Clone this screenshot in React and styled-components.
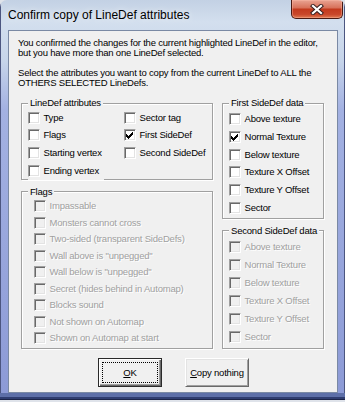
import React from 'react'
import styled, { createGlobalStyle } from 'styled-components'

const GlobalStyle = createGlobalStyle`
  html, body {
    margin: 0;
    padding: 0;
    background: #dfe3ea;
  }
  body {
    font-family: "Liberation Sans", Arial, sans-serif;
  }
`

const lineDefAttrs = [
  { label: 'Type', col: 1 },
  { label: 'Sector tag', col: 2 },
  { label: 'Flags', col: 1 },
  { label: 'First SideDef', col: 2, checked: true },
  { label: 'Starting vertex', col: 1 },
  { label: 'Second SideDef', col: 2 },
  { label: 'Ending vertex', col: 1, last: true },
]

const flags = [
  'Impassable',
  'Monsters cannot cross',
  'Two-sided (transparent SideDefs)',
  'Wall above is "unpegged"',
  'Wall below is "unpegged"',
  'Secret (hides behind in Automap)',
  'Blocks sound',
  'Not shown on Automap',
  'Shown on Automap at start',
]

const sideDefFields = [
  'Above texture',
  'Normal Texture',
  'Below texture',
  'Texture X Offset',
  'Texture Y Offset',
  'Sector',
]

const CheckMark = () => (
  <svg width="8" height="8" viewBox="0 0 8 8" shapeRendering="crispEdges">
    <path d="M0 3h1v1h1v1h1v-1h1v-1h1v-1h1v-1h1v3h-1v1h-1v1h-1v1h-1v1h-1v-1h-1v-1h-1z" fill="#000" />
  </svg>
)

const Check = ({ label, checked, disabled, last }) => (
  <CheckRow $disabled={disabled} $last={last}>
    <Box $disabled={disabled}>{checked && <CheckMark />}</Box>
    <span>{label}</span>
  </CheckRow>
)

const App = () => {
  return (
    <>
      <GlobalStyle />
      <Window>
        <TitleBar>
          <Title>Confirm copy of LineDef attributes</Title>
          <CloseBtn>
            <svg width="14" height="11" viewBox="0 0 14 11">
              <path d="M3 2 L11 9 M11 2 L3 9" stroke="#3a2222" strokeWidth="4.2" strokeLinecap="square" />
              <path d="M3 2 L11 9 M11 2 L3 9" stroke="#fff" strokeWidth="2.2" strokeLinecap="square" />
            </svg>
          </CloseBtn>
        </TitleBar>
        <Client>
          <Text>
            You confirmed the changes for the current highlighted LineDef in the editor,
            <br />
            but you have more than one LineDef selected.
          </Text>
          <Text $gap>
            Select the attributes you want to copy from the current LineDef to ALL the
            <br />
            OTHERS SELECTED LineDefs.
          </Text>
          <Groups>
            <Column>
              <Group>
                <Legend>LineDef attributes</Legend>
                <AttrGrid>
                  {lineDefAttrs.map(a => (
                    <AttrCell key={a.label} $col={a.col}>
                      <Check label={a.label} checked={a.checked} last={a.last} />
                    </AttrCell>
                  ))}
                </AttrGrid>
              </Group>
              <Group $grow $spaced>
                <Legend>Flags</Legend>
                <List $pitch={16.5} $indent={12} $top={1.5}>
                  {flags.map(f => (
                    <Check key={f} label={f} disabled />
                  ))}
                </List>
              </Group>
            </Column>
            <Column>
              <Group>
                <Legend>First SideDef data</Legend>
                <List $pitch={17.8} $indent={6} $top={1.8}>
                  {sideDefFields.map(f => (
                    <Check key={f} label={f} checked={f === 'Normal Texture'} />
                  ))}
                </List>
              </Group>
              <Group $grow $spaced>
                <Legend>Second SideDef data</Legend>
                <List $pitch={17.9} $indent={6} $top={2.7}>
                  {sideDefFields.map(f => (
                    <Check key={f} label={f} disabled />
                  ))}
                </List>
              </Group>
            </Column>
          </Groups>
          <Buttons>
            <Button $default>
              <u>O</u>K
            </Button>
            <Button>
              <u>C</u>opy nothing
            </Button>
          </Buttons>
        </Client>
      </Window>
    </>
  )
}

export default App

const Window = styled.div`
  width: 345px;
  height: 402px;
  box-sizing: border-box;
  display: flex;
  flex-direction: column;
  overflow: hidden;
  border-radius: 7px 7px 0 0;
  background:
    linear-gradient(to top, #dfe3ea 0 2px, #1c2448 2px 3px, #2f3d70 3px 5px, #5d6fa8 5px 9px, transparent 9px),
    linear-gradient(to right, #4c5680 0 1px, transparent 1px calc(100% - 1px), #4c5680 calc(100% - 1px)),
    linear-gradient(to bottom, #c3d1e4 0, #d3dfee 22px, #c7d5ea 60px, #a3b1e2 110px, #8c9ad6 100%);
`

const TitleBar = styled.div`
  height: 30px;
  flex-shrink: 0;
  display: flex;
  align-items: center;
  padding: 0 2px 0 8px;
  box-sizing: border-box;
`

const Title = styled.div`
  font-size: 12px;
  color: #000;
  text-shadow: 0 0 6px rgba(255, 255, 255, 0.9);
  padding-bottom: 1px;
`

const CloseBtn = styled.div`
  margin-left: auto;
  align-self: flex-start;
  width: 52px;
  height: 19px;
  box-sizing: border-box;
  display: flex;
  align-items: center;
  justify-content: center;
  border: 1px solid #4a1a12;
  border-top: none;
  border-radius: 0 0 5px 5px;
  background: linear-gradient(to bottom, #e9a493 0, #d8735c 42%, #c33a1e 52%, #c9472a 80%, #e07a52 100%);
  box-shadow: inset 0 0 0 1px rgba(255, 190, 170, 0.4);
`

const Client = styled.div`
  margin: 0 7px 0 8px;
  border: 1px solid #7a89a4;
  background: #f0f0f0;
  padding: 7.3px 0 5px 0;
  font-size: 9.5px;
  letter-spacing: -0.2px;
  line-height: 10px;
  color: #000;
`

const Text = styled.p`
  margin: ${p => (p.$gap ? '9.4px' : '0')} 0 0 0;
  padding-left: 9px;
  white-space: nowrap;
`

const Groups = styled.div`
  display: grid;
  grid-template-columns: 192px 102px;
  column-gap: 9px;
  margin: 10.6px 0 0 12px;
`

const Column = styled.div`
  display: flex;
  flex-direction: column;
`

const Group = styled.fieldset`
  margin: ${p => (p.$spaced ? '6.5px' : '0')} 0 0 0;
  padding: 0 0 1.5px 0;
  min-width: 0;
  border: 1px solid #a0a0a0;
  box-shadow: 1px 1px 0 #fff, inset 1px 1px 0 #fff;
  flex: ${p => (p.$grow ? '1' : 'none')};
`

const Legend = styled.legend`
  margin-left: 6px;
  padding: 0 2px;
  background: #f0f0f0;
  line-height: 10px;
  white-space: nowrap;
`

const AttrGrid = styled.div`
  display: grid;
  grid-template-columns: 96px 1fr;
  grid-auto-rows: 17.7px;
  padding: 0.5px 0 0 6px;
  margin-bottom: -2px;
`

const AttrCell = styled.div`
  grid-column: ${p => p.$col};
  display: flex;
`

const List = styled.div`
  display: grid;
  grid-auto-rows: ${p => p.$pitch}px;
  padding: ${p => p.$top}px 0 0 ${p => p.$indent}px;
`

const CheckRow = styled.label`
  display: flex;
  align-items: center;
  gap: 3.5px;
  white-space: nowrap;
  color: ${p => (p.$disabled ? '#a0a0a0' : '#000')};
  text-shadow: ${p => (p.$disabled ? '1px 1px 0 #fff' : 'none')};
  background: #f0f0f0;
  padding-right: ${p => (p.$last ? '5px' : '0')};
  position: relative;
`

const Box = styled.span`
  width: 12px;
  height: 12px;
  flex-shrink: 0;
  box-sizing: border-box;
  display: flex;
  align-items: center;
  justify-content: center;
  border: 1px solid;
  border-color: #a0a0a0 #fff #fff #a0a0a0;
  box-shadow: inset 1px 1px 0 #696969, inset -1px -1px 0 #e3e3e3;
  background: ${p => (p.$disabled ? '#f0f0f0' : '#fff')};
`

const Buttons = styled.div`
  display: flex;
  justify-content: center;
  gap: 23px;
  margin-top: 8.7px;
  padding-left: 1px;
`

const Button = styled.button`
  position: relative;
  width: 64px;
  height: 29px;
  padding: 0;
  box-sizing: border-box;
  font-family: inherit;
  font-size: 9.5px;
  letter-spacing: -0.2px;
  color: #000;
  background: #f0f0f0;
  border: 1px solid;
  border-radius: 0;
  border-color: ${p => (p.$default ? '#2a2a2a' : '#fff #696969 #696969 #fff')};
  box-shadow: ${p =>
    p.$default
      ? 'inset 1px 1px 0 #fff, inset -1px -1px 0 #696969, inset -2px -2px 0 #a0a0a0'
      : 'inset 1px 1px 0 #e3e3e3, inset -1px -1px 0 #a0a0a0'};

  &::after {
    content: '';
    display: ${p => (p.$default ? 'block' : 'none')};
    position: absolute;
    inset: 3px 3px 3px 3px;
    border: 1px dotted #000;
  }
`
